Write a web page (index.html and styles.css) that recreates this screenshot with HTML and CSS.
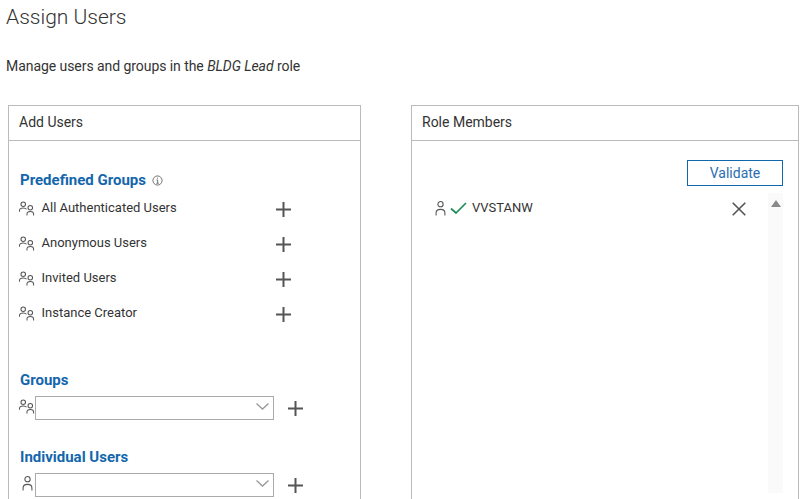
FILE: index.html
```html
<!DOCTYPE html>
<html lang="en">
<head>
<meta charset="utf-8">
<title>Assign Users</title>
<link rel="stylesheet" href="styles.css">
</head>
<body>
<svg class="defs" width="0" height="0" aria-hidden="true">
  <symbol id="user" viewBox="0 0 12 17">
    <circle cx="6" cy="3.6" r="3" fill="none" stroke="#555" stroke-width="1.2"/>
    <path d="M1 16.5V13.5C1 11 3 9.5 6 9.5S11 11 11 13.5V16.5" fill="none" stroke="#555" stroke-width="1.2"/>
  </symbol>
  <symbol id="users" viewBox="0 0 17 15">
    <circle cx="4.5" cy="3" r="2.4" fill="none" stroke="#555" stroke-width="1.1"/>
    <path d="M.5 11V9.8C.5 8 2 7 4.5 7S7.5 7.6 8 8.4" fill="none" stroke="#555" stroke-width="1.1"/>
    <circle cx="12" cy="6.6" r="2.4" fill="none" stroke="#555" stroke-width="1.1"/>
    <path d="M8.5 15V13.2C8.5 11.6 10 10.6 12 10.6S15.5 11.6 15.5 13.2V15" fill="none" stroke="#555" stroke-width="1.1"/>
  </symbol>
  <symbol id="plus" viewBox="0 0 15 15">
    <path d="M7.5 0V15M0 7.5H15" fill="none" stroke="#555" stroke-width="2"/>
  </symbol>
  <symbol id="chev" viewBox="0 0 13 7">
    <path d="M.5 .5L6.5 6L12.5 .5" fill="none" stroke="#999" stroke-width="1.3"/>
  </symbol>
</svg>
<main class="page">
  <h1 class="title">Assign Users</h1>
  <p class="intro">Manage users and groups in the <em>BLDG Lead</em> role</p>
  <div class="panels">
    <section class="panel panel-add">
      <h2 class="panel-head">Add Users</h2>
      <div class="panel-body add-body">
        <h3 class="group-title">Predefined Groups
          <svg class="info" viewBox="0 0 12 12" width="11" height="11"><circle cx="6" cy="6" r="5" fill="none" stroke="#666" stroke-width="1"/><path d="M4.8 5.4H6.2V9M4.8 9H7.4M6 2.8V4" fill="none" stroke="#666" stroke-width="1"/></svg>
        </h3>
        <ul class="rows">
          <li class="row"><svg class="ic-users"><use href="#users"/></svg><span class="row-label">All Authenticated Users</span><svg class="ic-plus"><use href="#plus"/></svg></li>
          <li class="row"><svg class="ic-users"><use href="#users"/></svg><span class="row-label">Anonymous Users</span><svg class="ic-plus"><use href="#plus"/></svg></li>
          <li class="row"><svg class="ic-users"><use href="#users"/></svg><span class="row-label">Invited Users</span><svg class="ic-plus"><use href="#plus"/></svg></li>
          <li class="row"><svg class="ic-users"><use href="#users"/></svg><span class="row-label">Instance Creator</span><svg class="ic-plus"><use href="#plus"/></svg></li>
        </ul>
        <h3 class="group-title groups-title">Groups</h3>
        <div class="picker">
          <svg class="ic-users picker-ic"><use href="#users"/></svg>
          <div class="combo"><svg class="ic-chev"><use href="#chev"/></svg></div>
          <svg class="ic-plus"><use href="#plus"/></svg>
        </div>
        <h3 class="group-title users-title">Individual Users</h3>
        <div class="picker">
          <svg class="ic-user picker-ic"><use href="#user"/></svg>
          <div class="combo"><svg class="ic-chev"><use href="#chev"/></svg></div>
          <svg class="ic-plus"><use href="#plus"/></svg>
        </div>
      </div>
    </section>
    <section class="panel panel-members">
      <h2 class="panel-head">Role Members</h2>
      <div class="panel-body members-body">
        <div class="actions"><button class="validate" type="button">Validate</button></div>
        <div class="member-wrap">
          <div class="member">
            <svg class="ic-user"><use href="#user"/></svg>
            <svg class="ic-check" viewBox="0 0 17 12" width="17" height="12"><path d="M1 6.5L6 11L16 1" fill="none" stroke="#1a9058" stroke-width="1.7"/></svg>
            <span class="member-name">VVSTANW</span>
            <svg class="ic-x" viewBox="0 0 14 14" width="14" height="14"><path d="M.7 .7L13.3 13.3M13.3 .7L.7 13.3" fill="none" stroke="#555" stroke-width="1.6"/></svg>
          </div>
          <div class="scrollbar"><span class="scroll-up"></span></div>
        </div>
      </div>
    </section>
  </div>
</main>
</body>
</html>
```
FILE: styles.css
```css
* { box-sizing: border-box; }
html, body { margin: 0; height: 499px; overflow: hidden; background: #fff; }
body { font-family: Roboto, "Liberation Sans", sans-serif; color: #333; }
.defs { position: absolute; }
.page { height: 499px; overflow: hidden; padding: 5px 12px 0 6px; }
.title { margin: 0; font-size: 21px; font-weight: 300; line-height: 25px; color: #333; }
.intro { margin: 26px 0 0; font-size: 14px; line-height: 20px; color: #333; letter-spacing: -.06px; }
.panels { display: flex; gap: 50px; margin: 29px 0 0 2px; }
.panel { border: 1px solid #bbb; height: 420px; flex: none; }
.panel-add { width: 353px; }
.panel-members { width: 388px; }
.panel-head { margin: 0; height: 35px; padding: 0 10px; border-bottom: 1px solid #bbb; font-size: 14px; font-weight: 400; line-height: 33px; color: #333; }
.add-body { padding: 29px 10px 0; }
.group-title { margin: 0 0 1px 1px; font-size: 15px; font-weight: 700; line-height: 20px; color: #1466ac; display: flex; align-items: center; gap: 6px; }
.info { margin-top: 1px; }
.rows { list-style: none; margin: 0; padding: 0; }
.row { display: flex; align-items: center; height: 35px; font-size: 13px; }
.ic-users { width: 16px; height: 15px; flex: none; }
.ic-user { width: 11px; height: 15px; flex: none; }
.ic-plus { width: 15px; height: 15px; flex: none; }
.row .ic-users { margin-top: -1px; }
.row .ic-plus { margin-top: 1px; }
.row-label { margin-left: 6.5px; width: 234px; line-height: 18px; margin-top: -1px; }
.groups-title { margin-top: 39px; }
.users-title { margin-top: 27px; }
.picker { display: flex; align-items: flex-start; height: 24px; margin-top: 6px; }
.ic-users.picker-ic { margin-top: 3px; }
.ic-user.picker-ic { margin-left: 3px; margin-right: 2px; margin-top: 3px; }
.combo { width: 239px; height: 24px; border: 1px solid #aaa; display: flex; justify-content: flex-end; align-items: center; padding-right: 4px; background: #fff; margin-right: 14px; }
.picker .ic-plus { margin-top: 5px; }
.ic-chev { width: 13px; height: 7px; margin-top: -3px; }
.members-body { padding: 19px 15px 0 0; }
.actions { display: flex; justify-content: flex-end; }
.validate { width: 96px; height: 26px; border: 1px solid #0f67ac; background: #fff; color: #2a6db0; font: 400 14px/22px Roboto, sans-serif; padding: 0; }
.member-wrap { display: flex; margin-top: 7px; }
.member { flex: 1; display: flex; align-items: center; height: 30px; padding-left: 23px; }
.member .ic-check { margin-left: 4px; }
.member-name { margin-left: 5px; font-size: 13px; flex: 1; margin-top: -2px; }
.ic-x { margin: 2px 22px 0 0; }
.scrollbar { width: 15px; height: 300px; background: #fafafa; display: flex; justify-content: center; }
.scroll-up { width: 0; height: 0; margin-top: 7px; border-left: 5.5px solid transparent; border-right: 5.5px solid transparent; border-bottom: 7px solid #8a8a8a; }
```
